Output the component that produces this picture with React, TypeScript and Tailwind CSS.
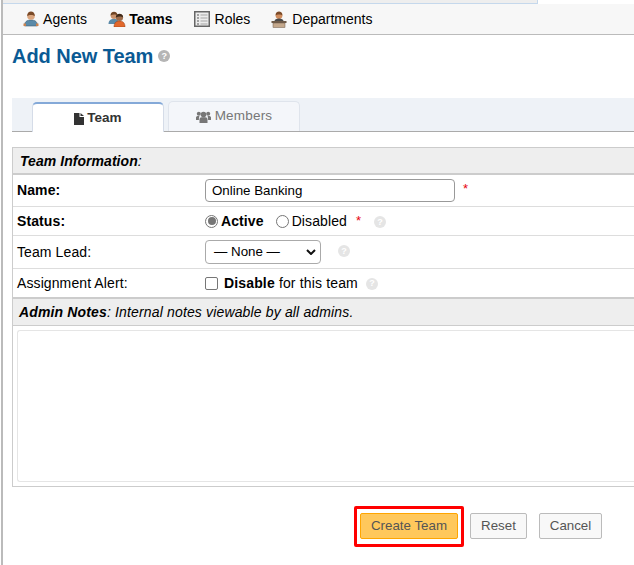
function Person() {
  return (
    <svg width="16" height="16" viewBox="0 0 16 16" className="shrink-0">
      <path d="M1.500 15c0-4 2-6 6.500-6s6.500 2 6.500 6z" fill="#5b8aa8" stroke="#3f6076" strokeWidth="0.600" />
      <rect x="0.500" y="12.500" width="2.500" height="2.500" fill="#c9824f" />
      <rect x="13" y="12.500" width="2.500" height="2.500" fill="#c9824f" />
      <circle cx="8" cy="5" r="3.800" fill="#dba67f" />
      <path d="M4.200 5c0-3 1.800-4.400 3.800-4.400S11.800 2 11.800 5C10 3.500 6 3.500 4.200 5z" fill="#7a4a28" />
    </svg>
  );
}

function TeamIcon() {
  return (
    <svg width="19" height="16" viewBox="0 0 19 16" className="shrink-0">
      <path d="M0.500 13c0-3 1.500-5 5.500-5s5 2 5 5z" fill="#5b8aa8" />
      <circle cx="6" cy="4.500" r="3.400" fill="#c9926c" />
      <path d="M2.600 4.500c0-2.500 1.600-3.700 3.400-3.700s3.400 1.200 3.400 3.700C8 3.200 4.500 3.200 2.600 4.500z" fill="#6e4526" />
      <path d="M6 16c0-4 2-6 5.500-6s5.500 2 5.500 6z" fill="#e2682c" stroke="#8c3d17" strokeWidth="0.500" />
      <circle cx="11.500" cy="6.500" r="3.600" fill="#9c6b4a" />
      <path d="M7.900 6.500c0-2.500 1.600-3.700 3.600-3.700s3.600 1.200 3.600 3.700c-1.500-1.200-5.200-1.200-7.200 0z" fill="#3f2a1a" />
    </svg>
  );
}

function RolesIcon() {
  return (
    <svg width="16" height="16" viewBox="0 0 16 16" className="shrink-0">
      <rect x="0.750" y="0.750" width="14.500" height="14.500" fill="#ececec" stroke="#666666" strokeWidth="1.500" />
      <path d="M3 4h2M3 7h2M3 10h2M3 13h2" stroke="#888888" strokeWidth="1.500" />
      <path d="M6.500 4h7M6.500 7h7M6.500 10h7M6.500 13h7" stroke="#a5a5a5" />
    </svg>
  );
}

function DeptIcon() {
  return (
    <svg width="16" height="17" viewBox="0 0 16 17" className="shrink-0">
      <circle cx="8" cy="4.500" r="3.400" fill="#d08d5e" />
      <path d="M4.600 4.500c0-2.800 1.600-3.900 3.400-3.900s3.400 1.100 3.400 3.900C10 3.200 6 3.200 4.600 4.500z" fill="#7a4a28" />
      <path d="M3.500 10c0-1.500 2-2.400 4.500-2.400s4.500 .9 4.500 2.400z" fill="#4a4a4a" />
      <rect x="0.500" y="10" width="15" height="2" fill="#6e5a48" />
      <rect x="2" y="12" width="12" height="4.500" fill="#c4a88c" stroke="#6e5a48" strokeWidth="0.500" />
    </svg>
  );
}

// font-awesome style page glyph used on the Team tab
function PageGlyph() {
  return (
    <svg width="10" height="12" viewBox="0 0 10 12" className="shrink-0">
      <path d="M0 0h5.500v4H10v8H0z" fill="#333333" />
      <path d="M6.500 0L10 3H6.500z" fill="#333333" />
    </svg>
  );
}

function UsersGlyph() {
  return (
    <svg width="15" height="12" viewBox="0 0 15 12" className="shrink-0">
      <circle cx="2.800" cy="2.800" r="2" fill="#777777" />
      <circle cx="12.200" cy="2.800" r="2" fill="#777777" />
      <circle cx="7.500" cy="3.600" r="2.800" fill="#777777" />
      <path d="M0 9V6.500C0 5.500 1 5 2.200 5c.6 0 1 .2 1.300.4C3.100 6 2.900 7.200 2.900 9z" fill="#777777" />
      <path d="M15 9V6.500c0-1-1-1.500-2.200-1.500-.6 0-1 .2-1.300.4.400.6.600 1.800.600 3.600z" fill="#777777" />
      <path d="M3.500 12V8.500c0-1.500 1-2.300 2-2.300h4c1 0 2 .8 2 2.300V12z" fill="#777777" />
    </svg>
  );
}

function Help({ className }: { className: string }) {
  return (
    <span className={`inline-flex h-3 w-3 items-center justify-center rounded-full text-[9px] font-bold leading-none text-white ${className}`}>?</span>
  );
}

const rowLabel = 'flex w-[192px] shrink-0 pl-[4px] tracking-[0.1px] text-black';

export default function App() {
  return (
    <div className="h-[565px] w-[634px] overflow-hidden bg-white pl-px font-['Liberation_Sans',Arial,sans-serif] text-[14px] text-black">
      <div className="h-[565px] border-l-2 border-[#bbbbbb]">
        {/* top strip */}
        <div className="h-1 w-[535px] border-b border-r border-[#c5d8ec] bg-[#eeeeee]" />

        {/* sub nav */}
        <div className="flex h-[31px] items-center border-b border-[#bbbbbb] bg-[#f7f7f7] pl-[20px]">
          <div className="flex items-center gap-[4px]"><Person /><span className="tracking-[0.1px]">Agents</span></div>
          <div className="ml-[21px] flex items-center gap-[2px]"><TeamIcon /><span className="font-bold">Teams</span></div>
          <div className="ml-[21px] flex items-center gap-[5px]"><RolesIcon /><span>Roles</span></div>
          <div className="ml-[21px] flex items-center gap-[5px]"><DeptIcon /><span>Departments</span></div>
        </div>

        <div className="pl-[9px]">
          {/* title */}
          <div className="flex items-center gap-[5px] pt-[8px]">
            <h2 className="text-[20px] font-bold leading-[26px] tracking-[-0.05px] text-[#0a5a94]">Add New Team</h2>
            <Help className="bg-[#b5b5b5]" />
          </div>

          {/* tabs */}
          <div className="mt-[29px] flex h-[34px] items-end gap-[4px] border-b border-[#aaaaaa] bg-[#eef2f7] pl-[20px]">
            <div className="-mb-px flex h-[30px] w-[132px] items-center justify-center gap-[3px] rounded-t-[5px] border-x border-t-2 border-x-[#d5dce8] border-t-[#84a9d8] bg-white pt-px font-bold text-[#333333]">
              <PageGlyph />
              <span className="text-[13.500px]">Team</span>
            </div>
            <div className="flex h-[30px] w-[132px] items-center justify-center gap-[4px] self-end rounded-t-[5px] border border-b-0 border-[#dfe4ec] bg-[#f4f6fa] text-[#777777]">
              <UsersGlyph />
              <span className="text-[13.500px] tracking-[0.2px]">Members</span>
            </div>
          </div>

          {/* form */}
          <div className="mt-[15px] h-[340px] border border-r-0 border-[#cccccc]">
            <div className="flex h-[27px] items-center border-b-2 border-[#cccccc] bg-[#eeeeee] pl-[7px] pt-px italic tracking-[0.05px]"><b>Team Information</b>:</div>
            <div className="flex h-[32px] items-center border-b border-[#dddddd]">
              <div className={`${rowLabel} font-bold`}>Name:</div>
              <div className="h-[23px] w-[250px] rounded-[4px] border border-[#999999] pl-[6px] text-[13.330px] leading-[21px]">Online Banking</div>
              <span className="mb-[3px] ml-[8px] text-[13px] text-red-600">*</span>
            </div>
            <div className="flex h-[29px] items-center border-b border-[#dddddd] tracking-[0.1px]">
              <div className={`${rowLabel} font-bold`}>Status:</div>
              <span className="h-[13px] w-[13px] rounded-full border border-[#767676] bg-white p-[1.500px]"><span className="block h-full w-full rounded-full bg-[#767676]" /></span>
              <b className="ml-[3px]">Active</b>
              <span className="ml-[12px] h-[13px] w-[13px] rounded-full border border-[#767676] bg-white" />
              <span className="ml-[3px]">Disabled</span>
              <span className="ml-[9px] text-[13px] text-red-600">*</span>
              <Help className="ml-[13px] mt-[2px] bg-[#e5e5e5]" />
            </div>
            <div className="flex h-[33px] items-center border-b border-[#dddddd]">
              <div className={rowLabel}>Team Lead:</div>
              <div className="flex h-[24px] w-[116px] items-center justify-between rounded-[4px] border border-[#aaaaaa] pl-[8px] pr-[4px] text-[13.330px]">
                <span>— None —</span>
                <svg width="10" height="6" viewBox="0 0 10 6"><path d="M1 1l4 4 4-4" fill="none" stroke="#111111" strokeWidth="2" /></svg>
              </div>
              <Help className="mb-[2px] ml-[17px] bg-[#e5e5e5]" />
            </div>
            <div className="flex h-[30px] items-center border-b-2 border-[#cccccc]">
              <div className={rowLabel}>Assignment Alert:</div>
              <span className="h-[13px] w-[13px] rounded-[2px] border border-[#767676] bg-white" />
              <span className="ml-[6px] tracking-[0.15px]"><b>Disable</b> for this team</span>
              <Help className="ml-[8px] mt-px bg-[#e5e5e5]" />
            </div>
            <div className="flex h-[27px] items-center border-b border-[#cccccc] bg-[#eeeeee] pl-[6px] italic tracking-[0.15px]"><b>Admin Notes</b>: Internal notes viewable by all admins.</div>
            <div className="ml-[4px] mt-[4px] h-[152px] rounded-l-[3px] border border-r-0 border-[#e5e5e5]" />
          </div>

          {/* actions */}
          <div className="mt-[19px] flex items-start pl-[342px]">
            <div className="rounded-[2px] border-[3px] border-[#ff0000] px-[3px] pb-[5px] pt-[4px]">
              <button className="block h-[26px] w-[98px] rounded-[2px] border border-[#ffa500] bg-[#ffc85c] text-[13.330px] text-[#555555]">Create Team</button>
            </div>
            <button className="ml-[6px] mt-[7px] h-[26px] w-[57px] rounded-[2px] border border-[#bbbbbb] bg-[#f8f8f8] text-[13.330px] text-[#555555]">Reset</button>
            <button className="ml-[12px] mt-[7px] h-[26px] w-[63px] rounded-[2px] border border-[#bbbbbb] bg-[#f8f8f8] text-[13.330px] text-[#555555]">Cancel</button>
          </div>
        </div>
      </div>
    </div>
  );
}
